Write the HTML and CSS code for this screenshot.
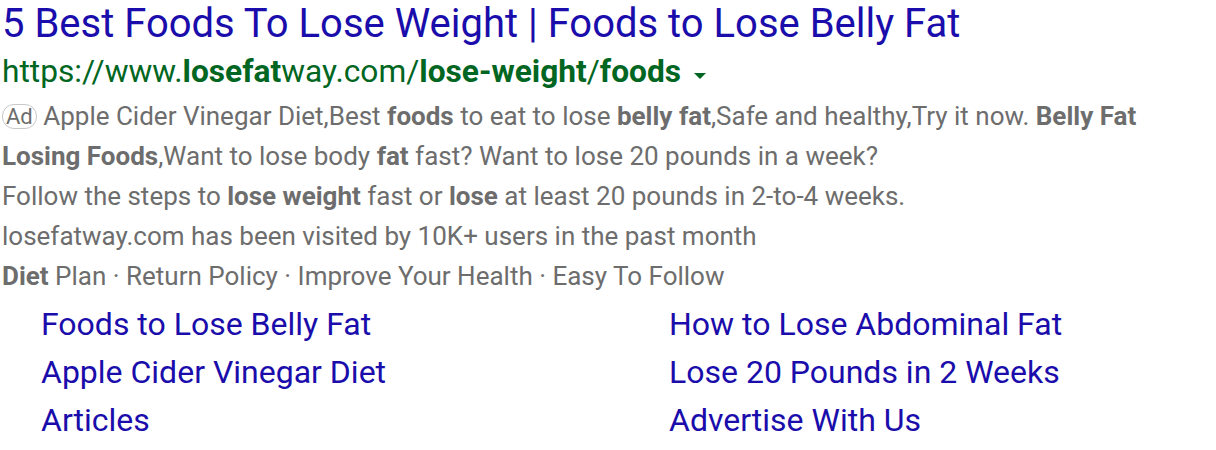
FILE: index.html
```html
<!DOCTYPE html>
<html lang="en">
<head>
<meta charset="utf-8">
<title>Ad result</title>
<link rel="stylesheet" href="styles.css">
</head>
<body>
<div class="result">
  <h3 class="title">5 Best Foods To Lose Weight | Foods to Lose Belly Fat</h3>
  <div class="url">https://www.<b>losefat</b>way.com/<b>lose-weight</b>/<b>foods</b><span class="caret"></span></div>
  <div class="desc">
    <div class="line"><span class="ad">Ad</span> Apple Cider Vinegar Diet,Best <b>foods</b> to eat to lose <b>belly fat</b>,Safe and healthy,Try it now. <b>Belly Fat</b></div>
    <div class="line"><b>Losing Foods</b>,Want to lose body <b>fat</b> fast? Want to lose 20 pounds in a week?</div>
    <div class="line">Follow the steps to <b>lose weight</b> fast or <b>lose</b> at least 20 pounds in 2-to-4 weeks.</div>
    <div class="line">losefatway.com has been visited by 10K+ users in the past month</div>
    <div class="line"><b>Diet</b> Plan · Return Policy · Improve Your Health · Easy To Follow</div>
  </div>
  <div class="sitelinks">
    <a href="#">Foods to Lose Belly Fat</a>
    <a href="#">How to Lose Abdominal Fat</a>
    <a href="#">Apple Cider Vinegar Diet</a>
    <a href="#">Lose 20 Pounds in 2 Weeks</a>
    <a href="#">Articles</a>
    <a href="#">Advertise With Us</a>
  </div>
</div>
</body>
</html>
```
FILE: styles.css
```css
html, body {
  margin: 0;
  padding: 0;
  background: #fff;
}
body {
  font-family: Roboto, "Liberation Sans", Arial, sans-serif;
}
.result {
  padding: 0 0 0 2px;
}
.title {
  margin: 0;
  font-size: 40px;
  font-weight: 400;
  line-height: 48px;
  color: #1a0dab;
  white-space: nowrap;
}
.url {
  font-size: 31.7px;
  line-height: 48px;
  color: #006621;
  white-space: nowrap;
  display: flex;
  align-items: center;
}
.url b {
  font-weight: 700;
}
.caret {
  display: inline-block;
  width: 0;
  height: 0;
  margin-left: 13px;
  margin-top: 7px;
  border-left: 6px solid transparent;
  border-right: 6px solid transparent;
  border-top: 6px solid #006621;
}
.desc {
  font-size: 26px;
  line-height: 40px;
  color: #6d6d6d;
}
.line {
  white-space: nowrap;
}
.desc b {
  font-weight: 700;
}
.ad {
  display: inline-block;
  font-size: 22px;
  line-height: 23px;
  padding: 0 3px;
  border: 1px solid #c8c8c8;
  border-radius: 12px;
  color: #6d6d6d;
  vertical-align: 1px;
}
.sitelinks {
  display: grid;
  grid-template-columns: 628px 1fr;
  padding: 4px 0 0 39px;
}
.sitelinks a {
  font-size: 32px;
  line-height: 48px;
  color: #1a0dab;
  text-decoration: none;
  white-space: nowrap;
}
```
